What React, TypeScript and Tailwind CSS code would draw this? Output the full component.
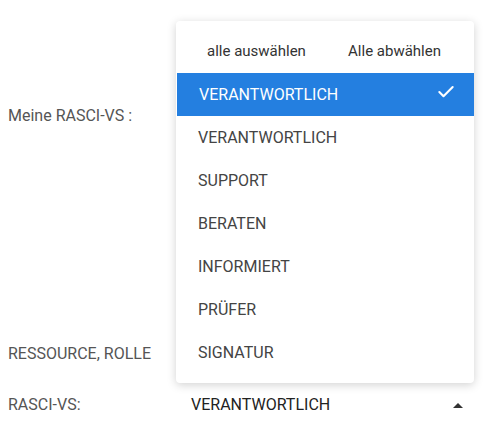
import { Check } from "lucide-react";

const options = [
  "VERANTWORTLICH",
  "VERANTWORTLICH",
  "SUPPORT",
  "BERATEN",
  "INFORMIERT",
  "PRÜFER",
  "SIGNATUR",
];

export default function App() {
  return (
    <div
      className="relative w-[493px] h-[447px] bg-white overflow-hidden"
      style={{ fontFamily: "Roboto, 'Noto Sans', sans-serif" }}
    >
      {/* Formular */}
      <div className="flex flex-col">
        <div className="flex items-center h-[232px] pl-2">
          <span className="text-[16px] text-[#555]">Meine RASCI-VS :</span>
        </div>
        <div className="flex items-center h-[48px] mt-[98px] pl-2">
          <span className="text-[16px] text-[#555]">RESSOURCE, ROLLE</span>
        </div>
        <div className="flex items-center h-[48px] mt-[3px] pl-2">
          <span className="w-[183px] text-[16px] text-[#555]">RASCI-VS:</span>
          <div className="flex items-center w-[274px] justify-between">
            <span className="text-[16px] text-[#222]">VERANTWORTLICH</span>
            <svg width="10" height="5" viewBox="0 0 10 5" className="mr-[2px]">
              <path d="M0 5 L5 0 L10 5 Z" fill="#333" />
            </svg>
          </div>
        </div>
      </div>

      {/* Auswahlmenü */}
      <div className="absolute left-[176px] top-[21px] w-[298px] h-[362px] bg-white rounded shadow-[0_2px_10px_rgba(0,0,0,0.18)] py-[8px]">
        <div className="flex items-center justify-between h-[44px] pl-[31px] pr-[33px] text-[15px] text-[#333]">
          <span>alle auswählen</span>
          <span>Alle abwählen</span>
        </div>
        {options.map((opt, i) => (
          <div
            key={i}
            className={
              i === 0
                ? "flex items-center justify-between h-[43px] pl-[22px] pr-[18px] bg-[#247fe0] text-white text-[16px] ml-[1px]"
                : "flex items-center h-[43px] pl-[22px] text-[16px] text-[#444]"
            }
          >
            <span>{opt}</span>
            {i === 0 && <Check size={20} strokeWidth={2.5} className="mb-[6px]" />}
          </div>
        ))}
      </div>
    </div>
  );
}
